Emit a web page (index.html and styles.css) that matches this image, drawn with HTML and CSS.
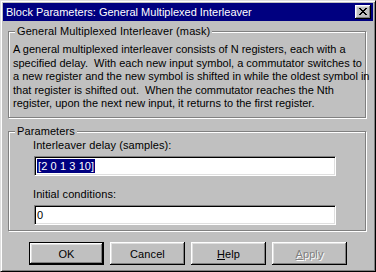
FILE: index.html
```html
<!DOCTYPE HTML>
<html>
<head>
    <meta charset="utf-8">
    <title>Block Parameters: General Multiplexed Interleaver</title>
    <link rel="stylesheet" href="styles.css">
</head>
<body>
<div class="window">
    <div class="titlebar">
        <span class="title">Block Parameters: General Multiplexed Interleaver</span>
        <button class="close" title="Close">
            <svg width="8" height="7" viewBox="0 0 8 7" shape-rendering="crispEdges">
                <path d="M0 0h2v1h-2zM6 0h2v1h-2zM1 1h2v1h-2zM5 1h2v1h-2zM2 2h4v1h-4zM3 3h2v1h-2zM2 4h4v1h-4zM1 5h2v1h-2zM5 5h2v1h-2zM0 6h2v1h-2zM6 6h2v1h-2z" fill="#000"/>
            </svg>
        </button>
    </div>

    <div class="group mask">
        <div class="legend">General Multiplexed Interleaver (mask)</div>
        <p class="desc">A general multiplexed interleaver consists of N registers, each with a<br>specified delay.&nbsp; With each new input symbol, a commutator switches to<br>a new register and the new symbol is shifted in while the oldest symbol in<br>that register is shifted out.&nbsp; When the commutator reaches the Nth<br>register, upon the next new input, it returns to the first register.</p>
    </div>

    <div class="group params">
        <div class="legend">Parameters</div>
        <label class="field-label">Interleaver delay (samples):</label>
        <div class="edit"><span class="selected">[2 0 1 3 10]</span></div>
        <label class="field-label">Initial conditions:</label>
        <div class="edit">0</div>
    </div>

    <div class="buttons">
        <button class="btn default">OK</button>
        <button class="btn">Cancel</button>
        <button class="btn"><u>H</u>elp</button>
        <button class="btn disabled"><u>A</u>pply</button>
    </div>
</div>
</body>
</html>
```

FILE: styles.css
```css
* {
    box-sizing: border-box;
}
body {
    margin: 0;
    background-color: #c0c0c0;
    font-family: "Liberation Sans", Arial, sans-serif;
    font-size: 11px;
    letter-spacing: 0.1px;
    color: #000;
}
.window {
    width: 376px;
    height: 272px;
    padding: 2px;
    background-color: #c0c0c0;
    border: 1px solid;
    border-color: #dfdfdf #000 #000 #dfdfdf;
    box-shadow: inset 1px 1px #fff, inset -1px -1px #808080;
}
.titlebar {
    height: 18px;
    display: flex;
    align-items: center;
    justify-content: space-between;
    padding: 0 2px 0 3px;
    background-color: #000080;
    color: #fff;
    letter-spacing: 0;
}
.close {
    width: 16px;
    height: 14px;
    padding: 0;
    border: none;
    display: flex;
    align-items: center;
    justify-content: center;
    background-color: #c0c0c0;
    box-shadow: inset -1px -1px #000, inset 1px 1px #fff, inset -2px -2px #808080, inset 2px 2px #dfdfdf;
}
.close svg {
    display: block;
    margin: 0 1px 1px 0;
}

/* etched group boxes */
.group {
    border: 1px solid #808080;
    box-shadow: inset 1px 1px #fff, 1px 1px #fff;
    margin-left: 5px;
    margin-right: 7px;
}
.legend {
    width: max-content;
    margin: -7px 0 0 6px;
    padding: 0 2px;
    line-height: 13px;
    background-color: #c0c0c0;
}
.mask {
    margin-top: 10px;
    height: 87px;
}
.desc {
    margin: 5px 0 0 4px;
    line-height: 13.5px;
    letter-spacing: 0;
    white-space: nowrap;
}
.params {
    margin-top: 13px;
    height: 100px;
}
.field-label {
    display: block;
    padding-left: 24px;
    line-height: 13px;
}
.params .field-label:nth-of-type(1) {
    margin-top: 1px;
}
.edit {
    width: 302px;
    height: 20px;
    margin: 4px 0 12px 25px;
    padding: 1px 2px;
    line-height: 16px;
    background-color: #fff;
    border: 1px solid;
    border-color: #808080 #fff #fff #808080;
    box-shadow: inset 1px 1px #000, inset -1px -1px #dfdfdf;
}
.edit:last-child {
    margin-bottom: 0;
}
.selected {
    display: inline-block;
    padding: 0 1px;
    background-color: #000080;
    color: #fff;
    line-height: 14px;
}

/* push buttons */
.buttons {
    display: flex;
    justify-content: center;
    gap: 6px;
    margin-top: 11px;
}
.btn {
    width: 75px;
    height: 23px;
    padding: 0;
    border: none;
    background-color: #c0c0c0;
    font-family: inherit;
    font-size: 11px;
    letter-spacing: inherit;
    color: #000;
    box-shadow: inset -1px -1px #000, inset 1px 1px #fff, inset -2px -2px #808080, inset 2px 2px #dfdfdf;
}
.btn.default {
    border: 1px solid #000;
}
.btn.disabled {
    color: #808080;
    text-shadow: 1px 1px #fff;
}
```
